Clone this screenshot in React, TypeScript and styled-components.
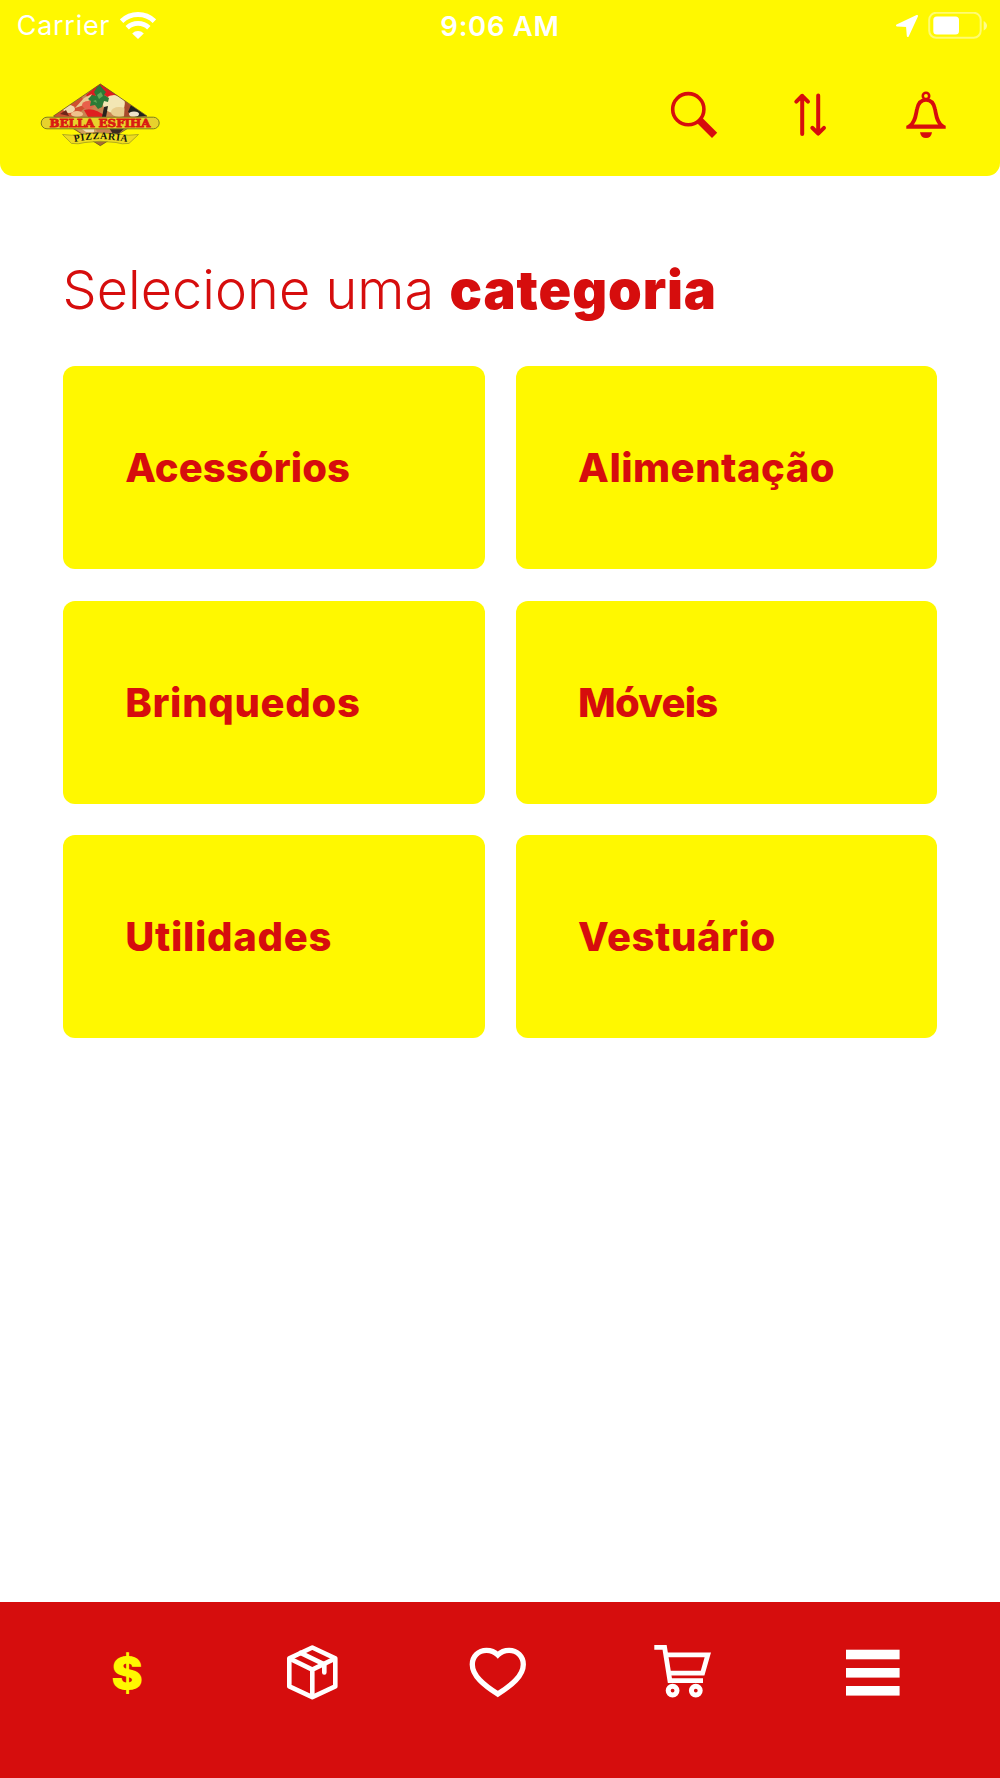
import React from "react";
import styled, { createGlobalStyle } from "styled-components";

const YELLOW = "#fff800";
const RED = "#d60d0d";

const GlobalStyle = createGlobalStyle`
  * {
    box-sizing: border-box;
  }
  body {
    margin: 0;
    background: #fff;
    font-family: "Inter", "Roboto", sans-serif;
  }
  svg {
    display: block;
    flex: none;
  }
`;

const Screen = styled.div`
  display: flex;
  flex-direction: column;
  width: 1000px;
  height: 1778px;
  overflow: hidden;
`;

const Header = styled.header`
  height: 176px;
  background-color: ${YELLOW};
  border-radius: 0 0 13px 13px;
`;

const StatusBar = styled.div`
  display: grid;
  grid-template-columns: 1fr auto 1fr;
  align-items: center;
  height: 51px;
  padding: 0 12px;
  color: #fff;
  font-size: 27px;
`;

const StatusGroup = styled.div<{ $end?: boolean }>`
  display: flex;
  align-items: center;
  gap: ${(props) => (props.$end ? "9px" : "10px")};
  justify-content: ${(props) => (props.$end ? "flex-end" : "flex-start")};
`;

const Carrier = styled.span`
  margin-left: 4.8px;
  letter-spacing: 0.7px;
`;

const Time = styled.span`
  font-size: 27.5px;
  font-weight: 600;
  letter-spacing: 0.7px;
`;

const Toolbar = styled.div`
  display: flex;
  align-items: center;
  justify-content: space-between;
  height: 125px;
  padding: 3px 50px 0 40px;
`;

const Actions = styled.div`
  display: flex;
  gap: 68px;
`;

const Main = styled.main`
  flex: 1;
  padding: 84px 62.6px 0;
`;

const Title = styled.h1`
  margin: 0;
  height: 106px;
  color: ${RED};
  font-size: 54px;
  font-weight: 300;
  line-height: 60px;
  white-space: nowrap;
  letter-spacing: 0.05px;
`;

const Strong = styled.strong`
  font-weight: 900;
  letter-spacing: 0.9px;
`;

const Grid = styled.div`
  display: grid;
  grid-template-columns: 1fr 1fr;
  grid-auto-rows: 203px;
  gap: 31.6px 31px;
`;

const Card = styled.div<{ $spacing: number }>`
  display: flex;
  align-items: center;
  padding-left: 62.6px;
  border-radius: 12px;
  background-color: ${YELLOW};
  color: ${RED};
  font-size: 40px;
  font-weight: 800;
  letter-spacing: ${(props) => props.$spacing}px;
`;

const TabBar = styled.nav`
  display: grid;
  grid-template-columns: repeat(5, 185.3px);
  justify-items: center;
  height: 176px;
  padding: 38px 0 0 34.5px;
  background-color: ${RED};
`;

const Tab = styled.div<{ $active?: boolean; $shift?: number }>`
  display: flex;
  align-items: center;
  justify-content: center;
  height: 64px;
  margin-left: ${(props) => props.$shift || 0}px;
  color: ${(props) => (props.$active ? YELLOW : "#fff")};
  font-size: 47px;
  font-weight: 900;
`;

const categories = [
  { name: "Acessórios", spacing: 0.1 },
  { name: "Alimentação", spacing: 0.5 },
  { name: "Brinquedos", spacing: 0.7 },
  { name: "Móveis", spacing: -0.8 },
  { name: "Utilidades", spacing: 0.7 },
  { name: "Vestuário", spacing: 0.6 },
];

const Wifi = () => (
  <svg width="36" height="28" viewBox="0 0 36 28" fill="none">
    <path d="M1.6 9.2a23.5 23.5 0 0 1 32.8 0" stroke="#fff" strokeWidth="4.9" />
    <path d="M7.2 15.8a15.6 15.6 0 0 1 21.6 0" stroke="#fff" strokeWidth="4.8" />
    <path d="M12.2 21.4a8.4 8.4 0 0 1 11.6 0L18 27z" fill="#fff" />
  </svg>
);

const Location = () => (
  <svg width="24" height="24" viewBox="0 0 24 24">
    <path
      d="M22 2L2 11.4L12 12L12.8 22z"
      fill="#fff"
      stroke="#fff"
      strokeWidth="2"
      strokeLinejoin="round"
    />
  </svg>
);

const Battery = () => (
  <svg width="60" height="28" viewBox="0 0 60 28">
    <rect
      x="1.2"
      y="0.8"
      width="51.5"
      height="25"
      rx="7"
      fill="none"
      stroke="#fff"
      strokeOpacity="0.45"
      strokeWidth="2"
    />
    <rect x="5.3" y="4.5" width="25.7" height="18" rx="3.5" fill="#fff" />
    <path d="M55.7 9c4.4 2.4 4.4 7.2 0 9.6z" fill="#fff" fillOpacity="0.55" />
  </svg>
);

const Logo = () => (
  <svg width="121" height="64" viewBox="0 0 121 64">
    <defs>
      <clipPath id="diamond">
        <path d="M60.3 1L13.5 33L60.3 62.7L107 33z" />
      </clipPath>
      <path id="arch" d="M34.5 59Q60 53.2 89 59.4" />
    </defs>
    <g clipPath="url(#diamond)">
      <rect width="121" height="64" fill="#c98350" />
      <path d="M46 12L60 0L80 12L75 19L60 9L50 17z" fill="#dc1c20" />
      <path d="M12 34L42 14L45 25L34 34z" fill="#cf5030" />
      <path d="M44 15L52 11L47 21L35 25z" fill="#e9c98f" />
      <ellipse cx="29" cy="26" rx="6" ry="4" fill="#f0d9ad" />
      <ellipse cx="37" cy="31" rx="6" ry="3" fill="#efc18c" />
      <path d="M20 31l6 -4l3 6z" fill="#6f2618" />
      <path d="M44 27Q55 24 66 34L48 34z" fill="#df1e20" />
      <ellipse cx="48" cy="22" rx="6" ry="4" fill="#e8604a" />
      <ellipse cx="74" cy="21" rx="11" ry="9" fill="#f3e6b4" />
      <ellipse cx="79" cy="29" rx="8" ry="5" fill="#e8cd8e" />
      <path d="M85 18L94 25L90 34L84 34z" fill="#a84a2c" />
      <path d="M91 22L107 33L96 34L88 29z" fill="#22231c" />
      <ellipse cx="94" cy="31" rx="5" ry="2.6" fill="#efe3cb" />
      <path d="M64 24l4 -1l-2 11h-4z" fill="#27231c" />
      <path
        d="M57 4l3 -2l3 4l3 3l-2 3l5 3l-1 4l-4 -1l-2 6l-4 2l-3 -4l-5 1l1 -5l-3 -2l4 -4l4 1l-2 -4z"
        fill="#2c7a36"
      />
      <path d="M57 12l4 -3l2 4l-4 3zM53 18l3 -1l1 3z" fill="#63a957" />
      <path d="M35 45h20l5 8l-12 2z" fill="#d2a25d" />
      <path d="M42 46h12v3h-8z" fill="#f0ddb2" />
      <path d="M69 45h16l-10 9z" fill="#3c2b20" />
      <path d="M50 58h20l-10 5z" fill="#a86d31" />
    </g>
    <path
      d="M60.3 1L13.5 33L60.3 62.7L107 33z"
      fill="none"
      stroke="#6c5a1c"
      strokeWidth="0.8"
    />
    <rect
      x="1.2"
      y="34.2"
      width="118"
      height="11.6"
      rx="5.8"
      fill="#e8d22c"
      stroke="#7d7c20"
      strokeWidth="1"
    />
    <path
      d="M22.5 51.5Q32 53 40 51.4Q60 48.5 80 51.4Q88 53 98.5 51.5L89 60.4Q82 61.6 76 59.5Q60 57 45 59.5Q38 61.6 31.5 60.4z"
      fill="#efdc20"
      stroke="#a09b20"
      strokeWidth="0.8"
    />
    <text
      x="9.5"
      y="44"
      textLength="101"
      lengthAdjust="spacingAndGlyphs"
      fontFamily="DejaVu Serif, serif"
      fontWeight="700"
      fontSize="11"
      fill="#d91a12"
      stroke="#d91a12"
      strokeWidth="0.8"
    >
      BELLA ESFIHA
    </text>
    <text
      fontFamily="Liberation Serif, serif"
      fontWeight="700"
      fontSize="10"
      letterSpacing="0.6"
      fill="#17170c"
    >
      <textPath href="#arch">PIZZARIA</textPath>
    </text>
  </svg>
);

const SearchIcon = () => (
  <svg width="48" height="48" viewBox="0 0 48 48" fill="none" stroke={RED}>
    <circle cx="18.3" cy="18.2" r="15.6" strokeWidth="3.6" />
    <path d="M28.6 28.4L44.6 44.4" strokeWidth="7.4" />
  </svg>
);

const SortIcon = () => (
  <svg
    width="48"
    height="48"
    viewBox="0 0 48 48"
    fill="none"
    stroke={RED}
    strokeWidth="4"
    strokeLinecap="round"
    strokeLinejoin="round"
  >
    <path d="M16.2 43V4.8M10.3 10.6L16.2 4.8L22 10.6" />
    <path d="M32.2 4.6V42.6M26.3 36.8L32.2 42.6L38 36.8" />
  </svg>
);

const BellIcon = () => (
  <svg width="48" height="48" viewBox="0 0 48 48" fill="none" stroke={RED}>
    <circle cx="24" cy="4.9" r="3.2" strokeWidth="2.6" />
    <path
      d="M7.5 35.2C13.2 31.5 13.6 24.5 15 18.2C16.2 12 19.5 8.9 24 8.9C28.5 8.9 31.8 12 33 18.2C34.4 24.5 34.8 31.5 40.5 35.2"
      strokeWidth="3.8"
    />
    <path d="M4.3 37.7V34.8L7 33.6H41L43.7 34.8V37.7z" fill={RED} stroke="none" />
    <path d="M18 41.2H30Q29 47.1 24 47.1Q19 47.1 18 41.2z" fill={RED} stroke="none" />
  </svg>
);

const BoxIcon = () => (
  <svg
    width="64"
    height="64"
    viewBox="0 0 64 64"
    fill="none"
    stroke="#fff"
    strokeWidth="4.6"
    strokeLinejoin="round"
  >
    <path d="M32.3 7.5L55.3 18.4V46.4L32.3 57.2L9.3 46.4V18.4z" />
    <path d="M9.3 18.4L32.3 29.6L55.3 18.4M32.3 29.6V57" />
    <path d="M20.6 12.9L44.3 24.4V32.4" strokeLinecap="round" />
  </svg>
);

const HeartIcon = () => (
  <svg
    width="64"
    height="64"
    viewBox="0 0 64 64"
    fill="none"
    stroke="#fff"
    strokeWidth="5.3"
  >
    <path d="M31.8 15C28.2 11.4 24.6 10.4 20.5 10.4C12.4 10.4 6.3 16.5 6.3 24.4C6.3 35.7 17.8 45 31.8 54C45.8 45 57.3 35.7 57.3 24.4C57.3 16.5 51.2 10.4 43.1 10.4C39 10.4 35.4 11.4 31.8 15z" />
  </svg>
);

const CartIcon = () => (
  <svg
    width="64"
    height="64"
    viewBox="0 0 64 64"
    fill="none"
    stroke="#fff"
    strokeWidth="4.8"
  >
    <path d="M3.3 7.3H13.6L18.9 40.7H52" />
    <path d="M15 14.9H56.8L51.6 33.1H18" />
    <circle cx="21.6" cy="50.6" r="4.4" strokeWidth="5" />
    <circle cx="44.8" cy="50.6" r="4.4" strokeWidth="5" />
  </svg>
);

const MenuIcon = () => (
  <svg width="54" height="64" viewBox="0 0 54 64" fill="#fff">
    <rect y="9.7" width="53.6" height="9.6" />
    <rect y="28" width="53.6" height="9.6" />
    <rect y="46" width="53.6" height="9.6" />
  </svg>
);

const App = () => {
  return (
    <Screen>
      <GlobalStyle />
      <Header>
        <StatusBar>
          <StatusGroup>
            <Carrier>Carrier</Carrier>
            <Wifi />
          </StatusGroup>
          <Time>9:06 AM</Time>
          <StatusGroup $end>
            <Location />
            <Battery />
          </StatusGroup>
        </StatusBar>
        <Toolbar>
          <Logo />
          <Actions>
            <SearchIcon />
            <SortIcon />
            <BellIcon />
          </Actions>
        </Toolbar>
      </Header>
      <Main>
        <Title>
          Selecione uma <Strong>categoria</Strong>
        </Title>
        <Grid>
          {categories.map((category) => (
            <Card key={category.name} $spacing={category.spacing}>
              {category.name}
            </Card>
          ))}
        </Grid>
      </Main>
      <TabBar>
        <Tab $active>$</Tab>
        <Tab>
          <BoxIcon />
        </Tab>
        <Tab>
          <HeartIcon />
        </Tab>
        <Tab>
          <CartIcon />
        </Tab>
        <Tab $shift={10}>
          <MenuIcon />
        </Tab>
      </TabBar>
    </Screen>
  );
};

export default App;
